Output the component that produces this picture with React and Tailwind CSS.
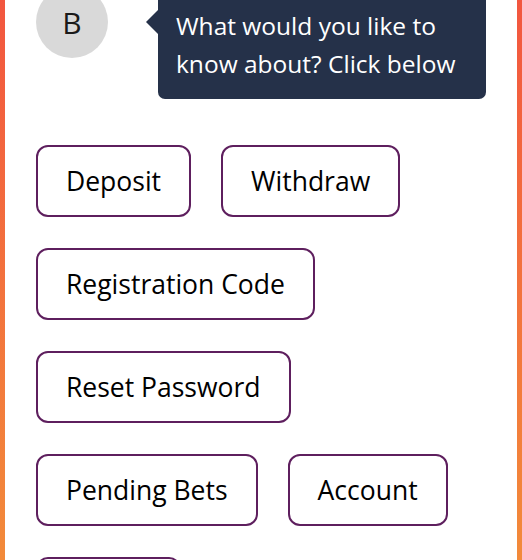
import React from "react";

const OPTIONS = [
  "Deposit",
  "Withdraw",
  "Registration Code",
  "Reset Password",
  "Pending Bets",
  "Account",
  "Others",
];

export default function App() {
  return (
    <div className="w-[522px] h-[560px] overflow-hidden bg-gradient-to-b from-[#f2563f] to-[#f28a3a] px-[5px]">
      <div
        className="h-full flex flex-col bg-white pl-[31px] pr-[31px] text-black"
        style={{ fontFamily: '"Open Sans", "Noto Sans", sans-serif' }}
      >
        {/* Bot message */}
        <div className="-mt-[14px] flex items-start">
          <div className="w-[72px] h-[72px] shrink-0 rounded-full bg-[#d9d9d9] flex items-center justify-center text-[30px] text-[#1a1a1a]">
            B
          </div>
          <div className="relative ml-[50px] -mt-[10px] w-[328px] rounded-[7px] bg-[#253149] px-[18px] pt-[31px] pb-[16px] text-[24.5px] leading-[38px] text-white">
            <span className="absolute -left-[12px] top-[34px] w-0 h-0 border-y-[12px] border-y-transparent border-r-[12px] border-r-[#253149]" />
            What would you like to know about? Click below
          </div>
        </div>

        {/* Quick options */}
        <div className="mt-[46px] flex flex-wrap gap-x-[30px] gap-y-[31px] w-[450px]">
          {OPTIONS.map((label) => (
            <button
              key={label}
              className="h-[72px] px-[28px] rounded-[12px] border-2 border-[#5e1f5e] bg-white text-[26.5px] leading-none"
            >
              {label}
            </button>
          ))}
        </div>
      </div>
    </div>
  );
}
